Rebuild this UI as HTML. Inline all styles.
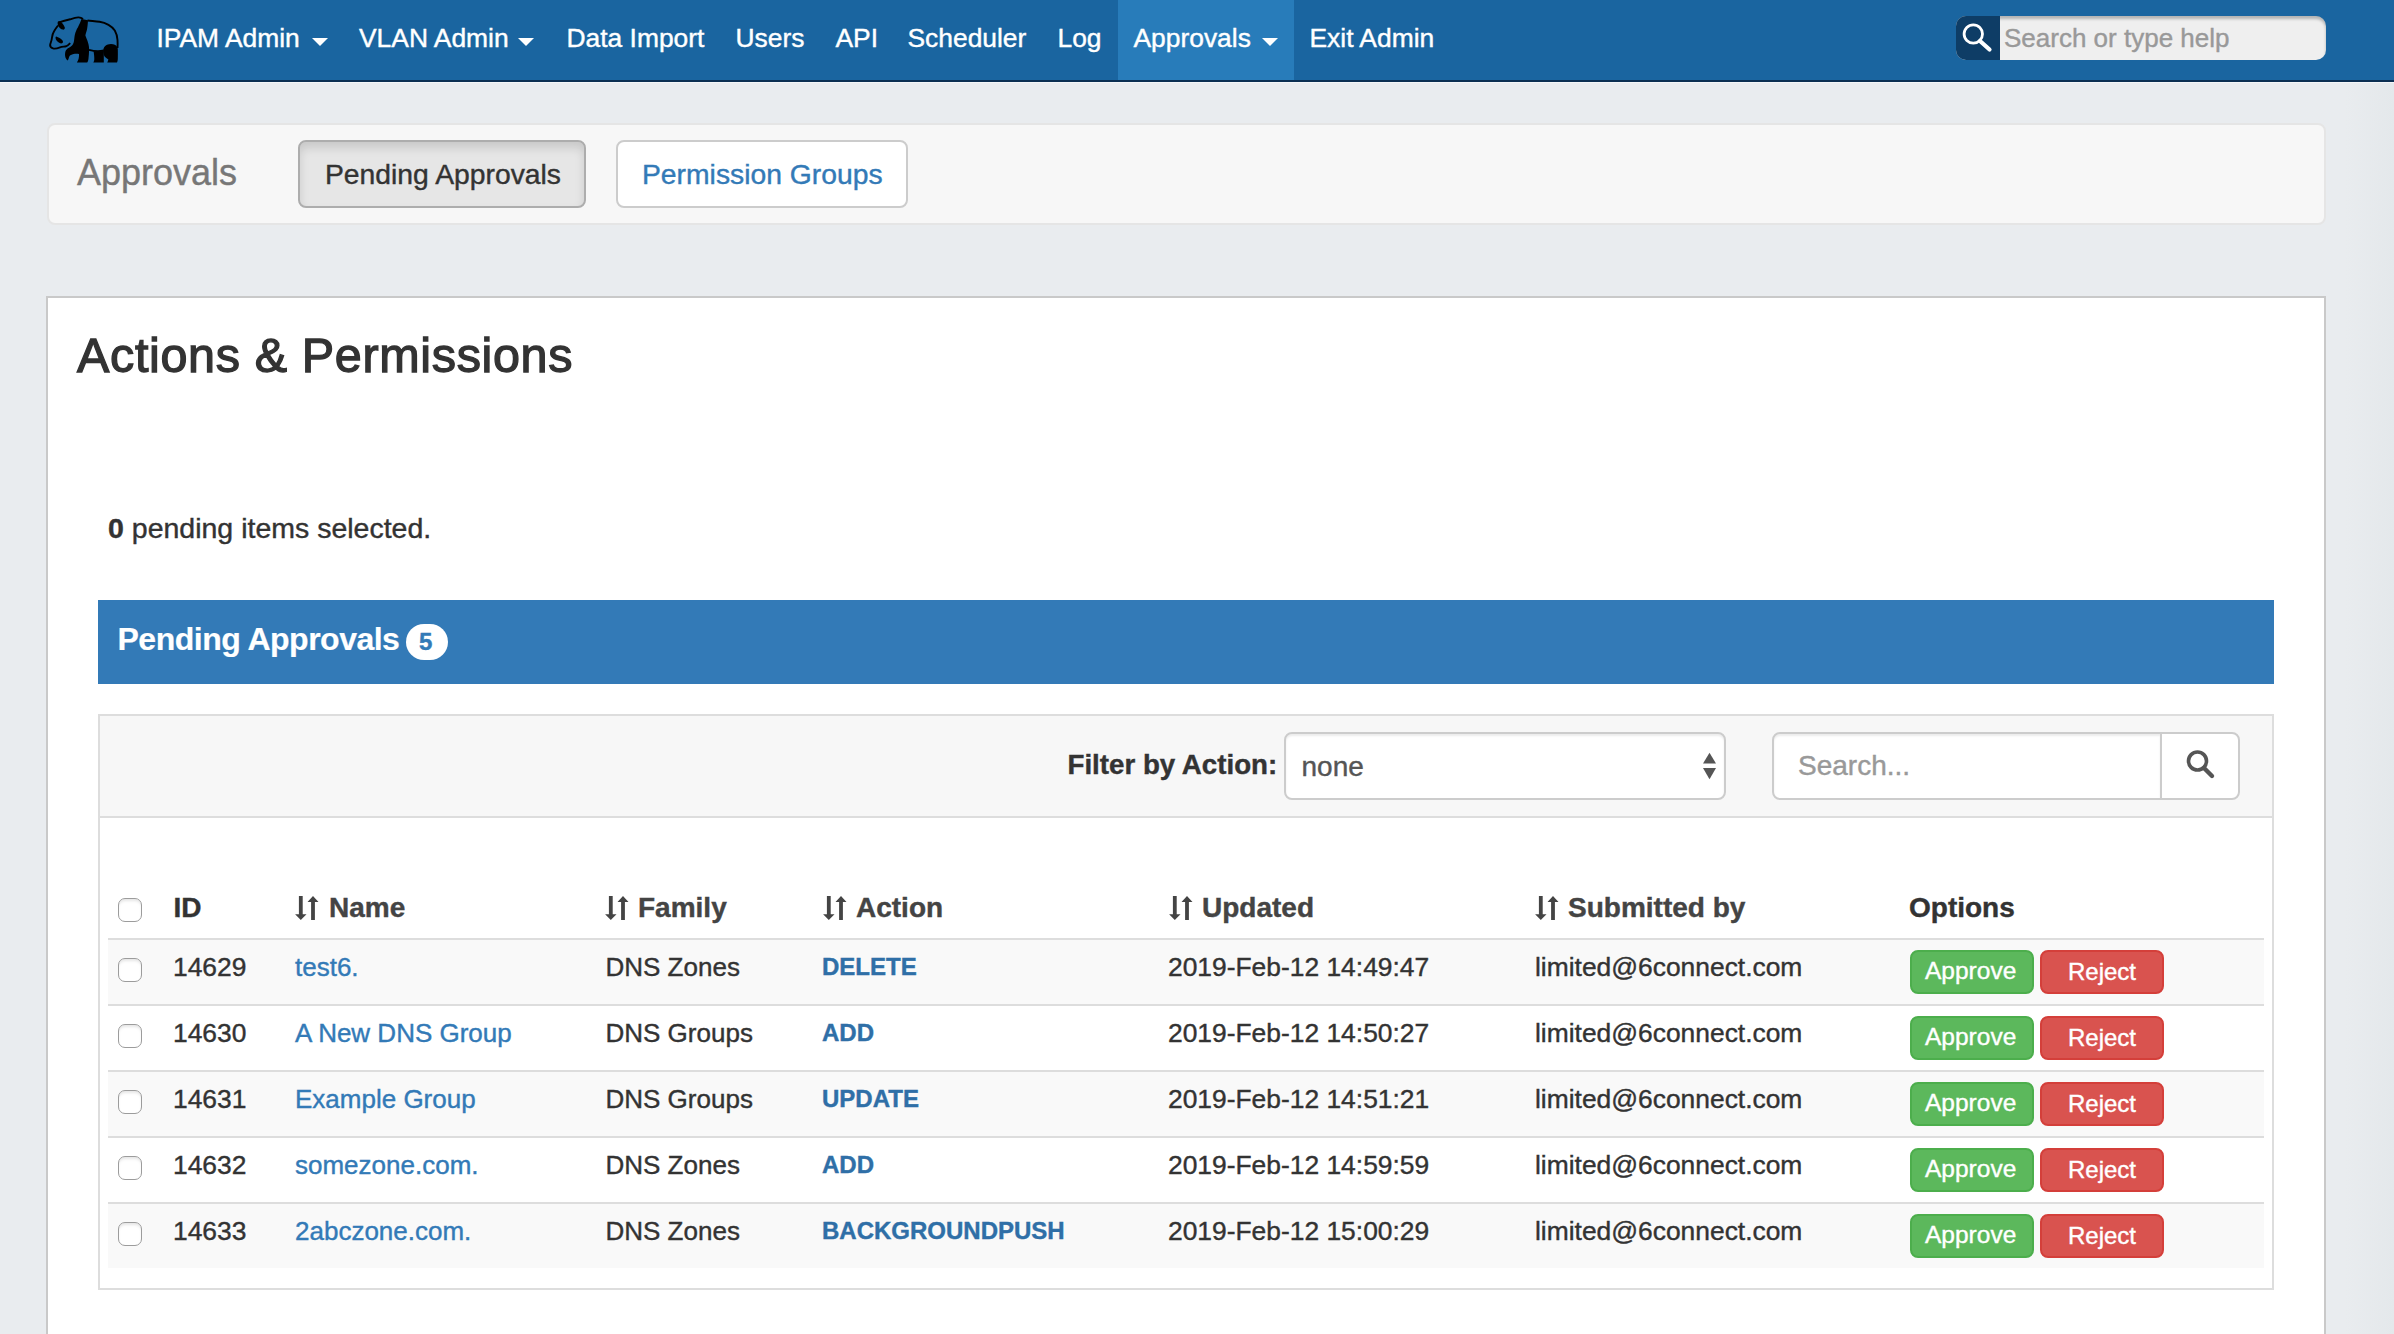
<!DOCTYPE html>
<html><head><meta charset="utf-8">
<style>
html,body{margin:0;padding:0;}
body{width:2394px;height:1334px;overflow:hidden;position:relative;background:linear-gradient(90deg,#e9ecef 0,#e9ecef 2345px,#e4e8eb 2394px);font-family:"Liberation Sans",sans-serif;color:#333;}
.a{position:absolute;}
.t{position:absolute;line-height:1;white-space:nowrap;-webkit-text-stroke:0.4px currentColor;}
#nav{left:0;top:0;width:2394px;height:80px;background:#1a65a0;}
#navline{left:0;top:80px;width:2394px;height:2px;background:#0b2f52;}
#navline2{left:0;top:82px;width:2394px;height:1px;background:#f4f6f8;}
.nv{color:#fff;font-size:26.4px;top:25.2px;}
.caret{position:absolute;width:0;height:0;border-left:8px solid transparent;border-right:8px solid transparent;border-top:8px solid #fff;}
#active{left:1118px;top:0;width:176px;height:80px;background:#287cba;}
#sbox{left:1956px;top:16px;width:370px;height:44px;border-radius:10px;background:#efefef;overflow:hidden;box-shadow:inset 0 3px 3px rgba(0,0,0,.25);}
#sicon{left:0;top:0;width:44px;height:44px;background:#0e3d66;}
#well{left:47px;top:123px;width:2275px;height:98px;background:#f7f7f7;border:2px solid #e5e5e5;border-radius:8px;}
.btn{position:absolute;box-sizing:border-box;border-radius:8px;border:2px solid #ccc;}
#panel{left:46px;top:296px;width:2276px;height:1100px;background:#fff;border:2px solid #c9c9c9;}
#phead{left:98px;top:600px;width:2176px;height:84px;background:#337ab7;}
#fbar{left:98px;top:714px;width:2172px;height:100px;background:#f7f7f7;border:2px solid #ddd;}
#tbox{left:98px;top:818px;width:2172px;height:470px;background:#fff;border:2px solid #ddd;border-top:none;}
.stripe{position:absolute;left:108px;width:2156px;height:64px;background:#f9f9f9;}
.hr{position:absolute;left:108px;width:2156px;height:2px;background:#ddd;}
.cb{position:absolute;left:118px;width:24px;height:24px;box-sizing:border-box;border:1.3px solid #9c9c9c;border-radius:7px;background:#fff;box-shadow:inset 0 3px 3px -1px rgba(0,0,0,.10);}
.th{font-size:28px;font-weight:bold;color:#444;top:894px;}
.td{font-size:26.4px;color:#333;}
.lk{color:#337ab7;}
.act{font-size:24px;font-weight:bold;color:#2f6fa7;}
.ap{position:absolute;left:1910px;width:124px;height:44px;box-sizing:border-box;background:#5cb85c;border:2px solid #4cae4c;border-radius:8px;}
.rj{position:absolute;left:2040px;width:124px;height:44px;box-sizing:border-box;background:#d9534f;border:2px solid #d43f3a;border-radius:8px;}
.bt{font-size:24.5px;color:#fff;}
</style></head>
<body>
<div id="nav" class="a"></div>
<div id="navline" class="a"></div>
<div id="navline2" class="a"></div>
<div id="active" class="a"></div>

<svg class="a" style="left:0;top:0" width="200" height="80" viewBox="0 0 200 80">
  <path d="M59,22.3 C63,21 67,20 70.2,19.3 C73,18.3 76,17.3 78.6,17.4 C80.5,17.5 82,18.2 83,19 M87.5,20.5 C92,21 96,21.3 99.6,21.8 C103,22.3 106,23.4 108.5,24.8 C111.5,26.5 113.5,28.5 114.8,30.5 C116.5,33.5 117.4,37 117.5,40 C117.7,43 117.6,46 117.5,48" fill="none" stroke="#000" stroke-width="1.9"/>
  <path d="M58,25.5 C56.5,27.5 55,29.5 54.2,31 C53,33 52.3,35 52,37.5 C51.8,40 50.8,42.5 50.2,44.5 C49.8,46.5 51,47.8 53,48.4 C55,49 57.5,48.3 60,47.3 C62,46.6 64,46.7 66,46.3 C67.8,45.8 69,44.5 70.2,43.2" fill="none" stroke="#000" stroke-width="1.9"/>
  <path d="M57.8,21.8 C58.8,21.2 60,21.2 61,22 C62.5,23.3 63.8,25 64.8,27.5 C65,28.8 64.2,29.8 62.8,29.6 C61,29.2 59.5,27.8 58.6,26.5 C57.8,25.3 57.3,23.3 57.8,21.8 Z" fill="#000"/>
  <path d="M56.2,36.6 C58.5,37.5 60.8,38.8 62.3,40.2 C63.3,41.2 63.2,42.8 62,43.3 C60.5,43.7 58.5,42.5 57.2,41.2 C56,40 55.3,38.3 55.6,37 Z" fill="#000"/>
  <path d="M81.5,19 L88,20.3 C87.8,23.5 87.6,26.8 87,29.6 C86.4,32 85.6,34 85.4,35.5 C86.2,38 87.3,40 87.9,42.3 C88.8,45 89.2,47.5 89.1,50 C89,53 88.8,56 88.5,58.5 C88.3,60.2 88,61.5 87.2,62.4 L76.8,62.4 C77.6,61.3 78.3,60.2 78.6,58.8 C79,57 79.1,55.5 79,54 C77.5,53.6 75.5,53.6 73.5,54 C71.5,54.4 70,55.2 69.3,56.5 C68.8,57.8 68.6,59.3 67.8,60.5 C66.3,59.8 65.3,57.8 65.1,55.8 C64.9,53.5 65.2,51.5 66,50.2 C67,48.8 68.6,47.8 70.2,47 C72,46 73.3,44 73.8,42 C74.3,39.5 74.4,37 74.8,35 C75.5,32 76.5,29.5 77.8,27.5 C79,25 80.5,22 81.5,19 Z" fill="#000"/>
  <path d="M89,49.9 C92,50.7 95,51.1 98,51.1 C100,51.1 102,50.8 103.8,50.4" fill="none" stroke="#000" stroke-width="1.9"/>
  <path d="M93.5,51.2 L103.8,51 L103.8,62.4 L93.3,62.4 C93.9,61.5 94.3,60.5 94.3,59 C94.3,56.5 94,53.5 93.5,51.2 Z" fill="#000"/>
  <path d="M103.2,50.5 C103.3,48 104.8,46 107,44.8 C109.5,43.8 112.5,43.8 114.8,44.7 C116.5,45.5 117.6,47 117.8,49 C117.9,52 117.9,56 117.8,59 C117.7,60.5 117.5,61.6 117,62.4 L107.2,62.4 C107.8,61.5 108.3,60.5 108.3,59.3 C107,58.5 105.5,57.8 104.6,56.5 C103.7,55 103.2,52.8 103.2,50.5 Z" fill="#000"/>
</svg>

<div class="t nv" style="left:156.5px">IPAM Admin</div><div class="caret" style="left:312px;top:38px"></div>
<div class="t nv" style="left:359px">VLAN Admin</div><div class="caret" style="left:518px;top:38px"></div>
<div class="t nv" style="left:566.5px">Data Import</div>
<div class="t nv" style="left:735.5px">Users</div>
<div class="t nv" style="left:835.5px">API</div>
<div class="t nv" style="left:907.5px">Scheduler</div>
<div class="t nv" style="left:1057.5px">Log</div>
<div class="t nv" style="left:1133.5px">Approvals</div><div class="caret" style="left:1262px;top:38px"></div>
<div class="t nv" style="left:1309.5px">Exit Admin</div>

<div id="sbox" class="a">
  <div id="sicon" class="a"></div>
  <svg class="a" style="left:0;top:0" width="44" height="44" viewBox="0 0 44 44">
    <circle cx="17.3" cy="18" r="9.2" fill="none" stroke="#fff" stroke-width="2.8"/>
    <line x1="24" y1="25" x2="33.5" y2="33.5" stroke="#fff" stroke-width="4.2" stroke-linecap="round"/>
  </svg>
  <div class="t" style="left:48px;top:9px;font-size:26px;color:#999">Search or type help</div>
</div>

<div id="well" class="a"></div>
<div class="t" style="left:77px;top:155px;font-size:36px;color:#777">Approvals</div>
<div class="btn" style="left:298px;top:140px;width:288px;height:68px;background:#e6e6e6;border-color:#adadad;box-shadow:inset 0 6px 10px rgba(0,0,0,.125)"></div>
<div class="t" style="left:325px;top:159.6px;font-size:28.3px;color:#333">Pending Approvals</div>
<div class="btn" style="left:616px;top:140px;width:292px;height:68px;background:#fff;"></div>
<div class="t" style="left:642px;top:160px;font-size:28.3px;color:#337ab7">Permission Groups</div>

<div id="panel" class="a"></div>
<div class="t" style="left:77px;top:330.6px;font-size:48.5px;letter-spacing:0.65px;-webkit-text-stroke:1.3px #333;color:#333">Actions &amp; Permissions</div>
<div class="t" style="left:108px;top:513.8px;font-size:28.5px;color:#333"><b>0</b> pending items selected.</div>

<div id="phead" class="a"></div>
<div class="t" style="left:117.5px;top:623px;font-size:32px;font-weight:bold;color:#fff;letter-spacing:-0.5px;-webkit-text-stroke:0.2px #fff">Pending Approvals</div>
<div class="a" style="left:406px;top:624px;width:42px;height:36px;border-radius:18px;background:#fff"></div>
<div class="t" style="left:419px;top:630px;font-size:24px;font-weight:bold;color:#337ab7">5</div>

<div id="fbar" class="a"></div>
<div class="t" style="left:1067.5px;top:750.5px;font-size:27.7px;font-weight:bold;color:#333">Filter by Action:</div>
<div class="btn" style="left:1284px;top:732px;width:442px;height:68px;background:#fff;box-shadow:inset 0 2px 2px rgba(0,0,0,.075)"></div>
<div class="t" style="left:1301.5px;top:753px;font-size:28px;color:#555">none</div>
<svg class="a" style="left:1700px;top:748px" width="20" height="34" viewBox="0 0 20 34">
  <path d="M3,15.5 L9.5,4.8 L16,15.5 Z" fill="#555"/>
  <path d="M3,20 L16,20 L9.5,31.2 Z" fill="#555"/>
</svg>
<div class="btn" style="left:1772px;top:732px;width:390px;height:68px;background:#fff;border-radius:8px 0 0 8px;box-shadow:inset 0 2px 2px rgba(0,0,0,.075)"></div>
<div class="t" style="left:1798px;top:752px;font-size:28px;color:#999">Search...</div>
<div class="btn" style="left:2160px;top:732px;width:80px;height:68px;background:#fff;border-radius:0 8px 8px 0;"></div>
<svg class="a" style="left:2180px;top:744px" width="44" height="44" viewBox="0 0 44 44">
  <circle cx="17.5" cy="17" r="9" fill="none" stroke="#555" stroke-width="3.6"/>
  <line x1="24" y1="24" x2="32" y2="32" stroke="#555" stroke-width="4.4" stroke-linecap="round"/>
</svg>

<div id="tbox" class="a"></div>
<div class="stripe" style="top:940px"></div>
<div class="stripe" style="top:1072px"></div>
<div class="stripe" style="top:1204px"></div>
<div class="hr" style="top:938px"></div>
<div class="hr" style="top:1004px"></div>
<div class="hr" style="top:1070px"></div>
<div class="hr" style="top:1136px"></div>
<div class="hr" style="top:1202px"></div>

<div class="cb" style="top:898px"></div>
<div class="t th" style="left:173.5px;color:#333">ID</div>
<svg class="a" style="left:295px;top:895px" width="26" height="26" viewBox="0 0 26 26"><path d="M3.9,1 h3.8 v18.2 h3.8 l-5.7,5.8 l-5.7,-5.8 h3.8 z M16.1,25 h3.8 v-18 h3.6 l-5.5,-6 l-5.5,6 h3.6 z" fill="#444"/></svg>
<div class="t th" style="left:329px">Name</div>
<svg class="a" style="left:605px;top:895px" width="26" height="26" viewBox="0 0 26 26"><path d="M3.9,1 h3.8 v18.2 h3.8 l-5.7,5.8 l-5.7,-5.8 h3.8 z M16.1,25 h3.8 v-18 h3.6 l-5.5,-6 l-5.5,6 h3.6 z" fill="#444"/></svg>
<div class="t th" style="left:638px">Family</div>
<svg class="a" style="left:823px;top:895px" width="26" height="26" viewBox="0 0 26 26"><path d="M3.9,1 h3.8 v18.2 h3.8 l-5.7,5.8 l-5.7,-5.8 h3.8 z M16.1,25 h3.8 v-18 h3.6 l-5.5,-6 l-5.5,6 h3.6 z" fill="#444"/></svg>
<div class="t th" style="left:856px">Action</div>
<svg class="a" style="left:1169px;top:895px" width="26" height="26" viewBox="0 0 26 26"><path d="M3.9,1 h3.8 v18.2 h3.8 l-5.7,5.8 l-5.7,-5.8 h3.8 z M16.1,25 h3.8 v-18 h3.6 l-5.5,-6 l-5.5,6 h3.6 z" fill="#444"/></svg>
<div class="t th" style="left:1202px">Updated</div>
<svg class="a" style="left:1535px;top:895px" width="26" height="26" viewBox="0 0 26 26"><path d="M3.9,1 h3.8 v18.2 h3.8 l-5.7,5.8 l-5.7,-5.8 h3.8 z M16.1,25 h3.8 v-18 h3.6 l-5.5,-6 l-5.5,6 h3.6 z" fill="#444"/></svg>
<div class="t th" style="left:1568px">Submitted by</div>
<div class="t th" style="left:1909px;color:#333">Options</div>

<!-- rows -->
<!--ROWS-->
<div class="cb" style="top:958px"></div>
<div class="t td" style="left:173px;top:953.5px">14629</div>
<div class="t td lk" style="left:295px;top:953.5px;font-size:26px">test6.</div>
<div class="t td" style="left:605.5px;top:953.5px;font-size:26px">DNS Zones</div>
<div class="t act" style="left:822px;top:955px">DELETE</div>
<div class="t td" style="left:1168px;top:953.5px">2019-Feb-12 14:49:47</div>
<div class="t td" style="left:1535px;top:953.5px">limited@6connect.com</div>
<div class="ap" style="top:950px"></div><div class="t bt" style="left:1925px;top:959px">Approve</div>
<div class="rj" style="top:950px"></div><div class="t bt" style="left:2068px;top:959.5px;font-size:24px">Reject</div>
<div class="cb" style="top:1024px"></div>
<div class="t td" style="left:173px;top:1019.5px">14630</div>
<div class="t td lk" style="left:295px;top:1019.5px;font-size:26px">A New DNS Group</div>
<div class="t td" style="left:605.5px;top:1019.5px;font-size:26px">DNS Groups</div>
<div class="t act" style="left:822px;top:1021px">ADD</div>
<div class="t td" style="left:1168px;top:1019.5px">2019-Feb-12 14:50:27</div>
<div class="t td" style="left:1535px;top:1019.5px">limited@6connect.com</div>
<div class="ap" style="top:1016px"></div><div class="t bt" style="left:1925px;top:1025px">Approve</div>
<div class="rj" style="top:1016px"></div><div class="t bt" style="left:2068px;top:1025.5px;font-size:24px">Reject</div>
<div class="cb" style="top:1090px"></div>
<div class="t td" style="left:173px;top:1085.5px">14631</div>
<div class="t td lk" style="left:295px;top:1085.5px;font-size:26px">Example Group</div>
<div class="t td" style="left:605.5px;top:1085.5px;font-size:26px">DNS Groups</div>
<div class="t act" style="left:822px;top:1087px">UPDATE</div>
<div class="t td" style="left:1168px;top:1085.5px">2019-Feb-12 14:51:21</div>
<div class="t td" style="left:1535px;top:1085.5px">limited@6connect.com</div>
<div class="ap" style="top:1082px"></div><div class="t bt" style="left:1925px;top:1091px">Approve</div>
<div class="rj" style="top:1082px"></div><div class="t bt" style="left:2068px;top:1091.5px;font-size:24px">Reject</div>
<div class="cb" style="top:1156px"></div>
<div class="t td" style="left:173px;top:1151.5px">14632</div>
<div class="t td lk" style="left:295px;top:1151.5px;font-size:26px">somezone.com.</div>
<div class="t td" style="left:605.5px;top:1151.5px;font-size:26px">DNS Zones</div>
<div class="t act" style="left:822px;top:1153px">ADD</div>
<div class="t td" style="left:1168px;top:1151.5px">2019-Feb-12 14:59:59</div>
<div class="t td" style="left:1535px;top:1151.5px">limited@6connect.com</div>
<div class="ap" style="top:1148px"></div><div class="t bt" style="left:1925px;top:1157px">Approve</div>
<div class="rj" style="top:1148px"></div><div class="t bt" style="left:2068px;top:1157.5px;font-size:24px">Reject</div>
<div class="cb" style="top:1222px"></div>
<div class="t td" style="left:173px;top:1217.5px">14633</div>
<div class="t td lk" style="left:295px;top:1217.5px;font-size:26px">2abczone.com.</div>
<div class="t td" style="left:605.5px;top:1217.5px;font-size:26px">DNS Zones</div>
<div class="t act" style="left:822px;top:1219px">BACKGROUNDPUSH</div>
<div class="t td" style="left:1168px;top:1217.5px">2019-Feb-12 15:00:29</div>
<div class="t td" style="left:1535px;top:1217.5px">limited@6connect.com</div>
<div class="ap" style="top:1214px"></div><div class="t bt" style="left:1925px;top:1223px">Approve</div>
<div class="rj" style="top:1214px"></div><div class="t bt" style="left:2068px;top:1223.5px;font-size:24px">Reject</div>
<!--/ROWS-->
</body></html>
